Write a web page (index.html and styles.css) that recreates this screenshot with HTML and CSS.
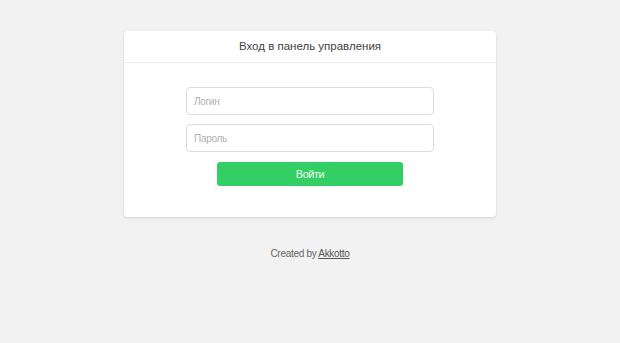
FILE: index.html
```html
<!DOCTYPE html>
<html lang="ru">
<head>
<meta charset="utf-8">
<title>Вход в панель управления</title>
<link rel="stylesheet" href="styles.css">
</head>
<body>
<div class="card">
  <div class="card-header">Вход в панель управления</div>
  <form class="card-body">
    <input class="field" type="text" placeholder="Логин">
    <input class="field" type="password" placeholder="Пароль">
    <button class="btn" type="button">Войти</button>
  </form>
</div>
<div class="footer">Created by <a href="#">Akkotto</a></div>
</body>
</html>
```
FILE: styles.css
```css
html, body {
  margin: 0;
  padding: 0;
  background: #f2f2f2;
  font-family: "Liberation Sans", Arial, sans-serif;
}
.card {
  width: 372px;
  margin: 31px auto 0;
  background: #fff;
  border-radius: 4px;
  box-shadow: 0 1px 3px rgba(0,0,0,0.12);
}
.card-header {
  height: 31px;
  line-height: 31px;
  text-align: center;
  font-size: 11.5px;
  color: #3f3f3f;
  border-bottom: 1px solid #ececec;
}
.card-body {
  margin: 0;
  padding: 24px 0 31px;
  display: flex;
  flex-direction: column;
  align-items: center;
}
.field {
  box-sizing: border-box;
  width: 248px;
  height: 28px;
  margin: 0 0 9px;
  padding: 0 7px;
  border: 1px solid #dcdcdc;
  border-radius: 4px;
  font-family: inherit;
  font-size: 10px;
  letter-spacing: -0.3px;
  color: #333;
  outline: none;
}
.field::placeholder {
  color: #b0b0b0;
}
.btn {
  box-sizing: border-box;
  width: 186px;
  height: 24px;
  margin-top: 1px;
  border: 0;
  border-radius: 3px;
  background: #34cf64;
  color: #eefaf2;
  font-family: inherit;
  font-size: 11px;
  font-weight: normal;
  letter-spacing: -0.5px;
  cursor: pointer;
}
.footer {
  margin-top: 31px;
  text-align: center;
  font-size: 10px;
  letter-spacing: -0.3px;
  color: #666;
}
.footer a {
  color: #555;
}
```
